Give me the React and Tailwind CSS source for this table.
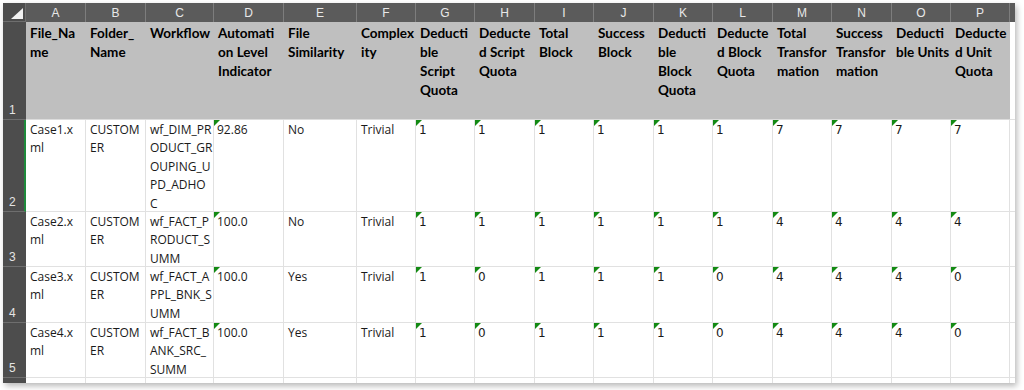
import React from "react";

const columns = [
  { key: "A", head: ["File_Na", "me"] },
  { key: "B", head: ["Folder_", "Name"] },
  { key: "C", head: ["Workflow"] },
  { key: "D", head: ["Automati", "on Level", "Indicator"] },
  { key: "E", head: ["File", "Similarity"] },
  { key: "F", head: ["Complex", "ity"] },
  { key: "G", head: ["Deducti", "ble", "Script", "Quota"] },
  { key: "H", head: ["Deducte", "d Script", "Quota"] },
  { key: "I", head: ["Total", "Block"] },
  { key: "J", head: ["Success", "Block"] },
  { key: "K", head: ["Deducti", "ble", "Block", "Quota"] },
  { key: "L", head: ["Deducte", "d Block", "Quota"] },
  { key: "M", head: ["Total", "Transfor", "mation"] },
  { key: "N", head: ["Success", "Transfor", "mation"] },
  { key: "O", head: ["Deducti", "ble Units"] },
  { key: "P", head: ["Deducte", "d Unit", "Quota"] },
];

const rows = [
  {
    n: 2,
    file: ["Case1.x", "ml"],
    wf: ["wf_DIM_PR", "ODUCT_GR", "OUPING_U", "PD_ADHO", "C"],
    level: "92.86",
    sim: "No",
    nums: ["1", "1", "1", "1", "1", "1", "7", "7", "7", "7"],
  },
  {
    n: 3,
    file: ["Case2.x", "ml"],
    wf: ["wf_FACT_P", "RODUCT_S", "UMM"],
    level: "100.0",
    sim: "No",
    nums: ["1", "1", "1", "1", "1", "1", "4", "4", "4", "4"],
  },
  {
    n: 4,
    file: ["Case3.x", "ml"],
    wf: ["wf_FACT_A", "PPL_BNK_S", "UMM"],
    level: "100.0",
    sim: "Yes",
    nums: ["1", "0", "1", "1", "1", "0", "4", "4", "4", "0"],
  },
  {
    n: 5,
    file: ["Case4.x", "ml"],
    wf: ["wf_FACT_B", "ANK_SRC_", "SUMM"],
    level: "100.0",
    sim: "Yes",
    nums: ["1", "0", "1", "1", "1", "0", "4", "4", "4", "0"],
  },
];

// little green "number stored as text" flag
const Flag = () => (
  <svg className="absolute left-0 top-0" width="6" height="6" viewBox="0 0 6 6">
    <polygon points="0,0 6,0 0,6" fill="#138a13" />
  </svg>
);

const Lines = ({ lines }) =>
  lines.map((l, i) => (
    <div key={i} className="whitespace-nowrap">
      {l}
    </div>
  ));

const TextCell = ({ lines }) => (
  <div className="border-r border-b border-[#e1e1e1] bg-white pl-[4px] pt-[1px] text-[12px] leading-[18.4px] text-[#1a1a1a] font-['Open_Sans',sans-serif] overflow-hidden">
    <Lines lines={lines} />
  </div>
);

const NumCell = ({ value, sans }) => (
  <div
    className={
      "relative border-r border-b border-[#e1e1e1] bg-white pl-[3px] pt-[1px] leading-[18.4px] text-[#1a1a1a] " +
      (sans
        ? "text-[12px] font-['Open_Sans',sans-serif]"
        : "text-[12px] font-['DejaVu_Sans',sans-serif]")
    }
  >
    <Flag />
    {value}
  </div>
);

const RowHead = ({ n, active }) => (
  <div
    className={
      "flex items-end border-b border-[#6e6e6e] bg-[#4d4d4d] pl-[6px] pb-[2px] text-[12px] leading-[14px] text-[#e4e4e4] font-['Liberation_Sans',sans-serif] " +
      (active ? "border-r-2 border-r-[#1e8a3c]" : "")
    }
  >
    {n}
  </div>
);

export default function App() {
  return (
    <div className="h-[390px] w-[1024px] bg-white pl-[3px] pt-[3px]">
      <div className="grid w-[1012px] grid-cols-[23px_60px_60px_68px_70px_73px_59px_59px_60px_59px_60px_59px_60px_59px_60px_59px_59px_5px] grid-rows-[19px_98px_92px_55px_56px_55px_5px] overflow-hidden bg-white shadow-[2px_3px_6px_rgba(0,0,0,0.28)]">
        {/* column letters */}
        <div className="relative border-r border-b border-[#6e6e6e] bg-[#4d4d4d]">
          <svg className="absolute bottom-[2px] right-[2px]" width="12" height="11" viewBox="0 0 12 11">
            <polygon points="12,0 12,11 0,11" fill="#f2f2f2" />
          </svg>
        </div>
        {columns.map((c) => (
          <div
            key={c.key}
            className="flex items-center justify-center border-r border-[#7d7d7d] bg-[#5b5b5b] text-[12px] text-[#e8e8e8] font-['Liberation_Sans',sans-serif]"
          >
            {c.key}
          </div>
        ))}
        <div className="bg-[#5b5b5b]" />

        {/* header row */}
        <RowHead n={1} />
        {columns.map((c) => (
          <div
            key={c.key}
            className="border-b border-[#dcdcdc] bg-[#bfbfbf] pl-[4px] pt-[2px] text-[13.5px] font-bold leading-[19px] text-black font-['Lato',sans-serif]"
          >
            <Lines lines={c.head} />
          </div>
        ))}
        <div className="border-b border-[#e1e1e1] bg-white" />

        {/* data rows */}
        {rows.map((r) => (
          <React.Fragment key={r.n}>
            <RowHead n={r.n} active={r.n === 2} />
            <TextCell lines={r.file} />
            <TextCell lines={["CUSTOM", "ER"]} />
            <TextCell lines={r.wf} />
            <NumCell value={r.level} sans />
            <TextCell lines={[r.sim]} />
            <TextCell lines={["Trivial"]} />
            {r.nums.map((v, i) => (
              <NumCell key={i} value={v} />
            ))}
            <div className="border-b border-[#e1e1e1] bg-white" />
          </React.Fragment>
        ))}

        {/* partial row at the bottom */}
        <div className="bg-[#4d4d4d]" />
        {columns.map((c) => (
          <div key={c.key} className="border-r border-[#e1e1e1] bg-white" />
        ))}
        <div className="bg-white" />
      </div>
    </div>
  );
}
